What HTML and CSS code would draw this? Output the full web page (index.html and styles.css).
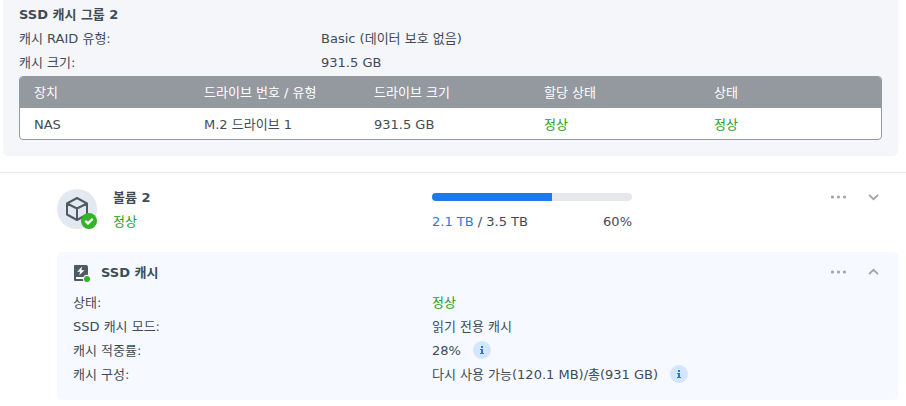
FILE: index.html
```html
<!DOCTYPE html>
<html lang="ko">
  <head>
    <meta charset="UTF-8" />
    <meta name="viewport" content="width=device-width, initial-scale=1.0" />
    <title>SSD 캐시</title>
    <link rel="stylesheet" href="styles.css">
  </head>
  <body>
    <section class="group">
      <h2 class="title">SSD 캐시 그룹 2</h2>
      <dl class="props">
        <dt>캐시 RAID 유형:</dt>
        <dd>Basic (데이터 보호 없음)</dd>
        <dt>캐시 크기:</dt>
        <dd>931.5 GB</dd>
      </dl>
      <div class="table-box">
        <table class="drives">
          <thead>
            <tr>
              <th>장치</th>
              <th>드라이브 번호 / 유형</th>
              <th>드라이브 크기</th>
              <th>할당 상태</th>
              <th class="last">상태</th>
            </tr>
          </thead>
          <tbody>
            <tr>
              <td>NAS</td>
              <td>M.2 드라이브 1</td>
              <td>931.5 GB</td>
              <td class="ok">정상</td>
              <td class="ok">정상</td>
            </tr>
          </tbody>
        </table>
      </div>
    </section>

    <section class="volume">
      <div class="volume-head">
        <div class="volume-name">
          <svg class="volume-icon" width="40" height="40" viewBox="0 0 40 40">
            <circle cx="20" cy="20" r="20" fill="#e2e9f0" />
            <path d="M20 9 L30 14.5 V25.5 L20 31 L10 25.5 V14.5 Z M10 14.5 L20 19.5 L30 14.5 M20 19.5 V31" fill="none" stroke="#505a66" stroke-width="2" stroke-linejoin="round" />
            <circle cx="32" cy="32" r="8" fill="#32b426" />
            <path d="M28.3 31.8 L31 34.3 L35.7 29.8" fill="none" stroke="#fff" stroke-width="2.4" />
          </svg>
          <div>
            <h2 class="title">볼륨 2</h2>
            <div class="ok">정상</div>
          </div>
        </div>
        <div class="usage">
          <div class="bar"><div class="bar-fill" style="width: 60%"></div></div>
          <div class="usage-text">
            <span><span class="used">2.1 TB</span> / 3.5 TB</span>
            <span>60%</span>
          </div>
        </div>
        <div class="actions">
          <button class="icon-btn" aria-label="더 보기">
            <svg width="16" height="16" viewBox="0 0 16 16" fill="#a0a4ab">
              <circle cx="1.5" cy="8" r="1.6" />
              <circle cx="7.5" cy="8" r="1.6" />
              <circle cx="13.5" cy="8" r="1.6" />
            </svg>
          </button>
          <button class="icon-btn" aria-label="펼치기">
            <svg width="16" height="16" viewBox="0 0 16 16" fill="none" stroke="#a0a4ab" stroke-width="1.8">
              <path d="M3 5.8 L7.5 10.2 L12 5.8" />
            </svg>
          </button>
        </div>
      </div>

      <div class="cache">
        <div class="cache-head">
          <svg class="cache-icon" width="17" height="17" viewBox="0 0 17 17">
            <path d="M2 0 H13 Q15 0 15 2 V15 Q15 16 14 16 H2 Q1 16 1 15 V1 Q1 0 2 0 Z" fill="#505a66" />
            <path d="M3 12 H13 V14 H3 Z M9 1.5 L4.2 6.8 H7.2 L6.2 10.2 L11.5 5.2 H8.4 Z" fill="#fff" />
            <circle cx="14" cy="14" r="4.2" fill="#f6f9ff" />
            <circle cx="14" cy="14" r="3" fill="#32b426" />
          </svg>
          <h3 class="title">SSD 캐시</h3>
          <div class="actions">
            <button class="icon-btn" aria-label="더 보기">
              <svg width="16" height="16" viewBox="0 0 16 16" fill="#a0a4ab">
                <circle cx="1.5" cy="8" r="1.6" />
                <circle cx="7.5" cy="8" r="1.6" />
                <circle cx="13.5" cy="8" r="1.6" />
              </svg>
            </button>
            <button class="icon-btn" aria-label="접기">
              <svg width="16" height="16" viewBox="0 0 16 16" fill="none" stroke="#a0a4ab" stroke-width="1.8">
                <path d="M3 10.2 L7.5 5.8 L12 10.2" />
              </svg>
            </button>
          </div>
        </div>
        <dl class="props cache-props">
          <dt>상태:</dt>
          <dd class="ok">정상</dd>
          <dt>SSD 캐시 모드:</dt>
          <dd>읽기 전용 캐시</dd>
          <dt>캐시 적중률:</dt>
          <dd>
            28%
            <button class="info" aria-label="정보">
              <svg width="18" height="18" viewBox="0 0 18 18" fill="#1d7be9">
                <path d="M8 5 H10 V7 H8 Z M7 8 H10 V12 H11 V13 H7 V12 H8 V9 H7 Z" />
              </svg>
            </button>
          </dd>
          <dt>캐시 구성:</dt>
          <dd>
            다시 사용 가능(120.1 MB)/총(931 GB)
            <button class="info" aria-label="정보">
              <svg width="18" height="18" viewBox="0 0 18 18" fill="#1d7be9">
                <path d="M8 5 H10 V7 H8 Z M7 8 H10 V12 H11 V13 H7 V12 H8 V9 H7 Z" />
              </svg>
            </button>
          </dd>
        </dl>
      </div>
    </section>
  </body>
</html>
```
FILE: styles.css
```css
* {
  box-sizing: border-box;
}
body {
  margin: 0;
  background: #fff;
  color: #414b55;
  font-family: Verdana, "DejaVu Sans", "Noto Sans CJK KR", sans-serif;
  font-size: 13px;
  line-height: 24px;
}
.title {
  margin: 0;
  font-size: 13px;
  font-weight: bold;
}
.ok {
  color: #1f9c16;
}

/* cache group */
.group {
  margin: 0 8px 16px 3px;
  padding: 3px 16px 16px;
  background: #f4f6fa;
  border-radius: 0 0 5px 5px;
}
.props {
  display: grid;
  grid-template-columns: 35% 1fr;
  margin: 0;
}
.props dd {
  margin: 0;
}
.table-box {
  margin-top: 1px;
  border: 1px solid #94989f;
  border-radius: 4px;
  background: #fff;
  overflow: hidden;
}
.drives {
  width: 100%;
  table-layout: fixed;
  border-collapse: collapse;
}
.drives th,
.drives td {
  width: 170px;
  height: 31px;
  padding: 0 14px;
  text-align: left;
  font-weight: normal;
}
.drives th {
  background: #94989f;
  color: #fff;
}
.drives td {
  padding-top: 2px;
}
.drives .last {
  width: auto;
}

/* volume */
.volume {
  padding: 13px 8px 0 57px;
  border-top: 1px solid #e6ebf2;
}
.volume-head {
  display: flex;
  align-items: flex-start;
}
.volume-name {
  display: flex;
  gap: 16px;
  width: 375px;
}
.volume-icon {
  margin-top: 3px;
}
.usage {
  width: 200px;
  padding-top: 7px;
}
.bar {
  height: 8px;
  border-radius: 4px;
  background: #e6e8eb;
  overflow: hidden;
}
.bar-fill {
  height: 100%;
  background: #1d7be9;
}
.usage-text {
  display: flex;
  justify-content: space-between;
  margin-top: 9px;
}
.used {
  color: #1d7be9;
}
.actions {
  display: flex;
  gap: 11px;
  align-self: flex-start;
  margin-left: auto;
  padding-right: 12px;
}
.icon-btn {
  display: flex;
  align-items: center;
  justify-content: center;
  width: 24px;
  height: 22px;
  padding: 0;
  border: none;
  background: none;
  cursor: pointer;
}

/* ssd cache */
.cache {
  margin-top: 18px;
  padding: 9px 0 13px 16px;
  border-radius: 5px;
  background: #f6f9ff;
}
.cache-head {
  display: flex;
  align-items: center;
  margin-bottom: 6px;
}
.cache-icon {
  margin-right: 11px;
}
.cache-props {
  grid-template-columns: 359px 1fr;
}
.info {
  width: 18px;
  height: 18px;
  margin-left: 8px;
  padding: 0;
  border: none;
  border-radius: 50%;
  background: #d3e6fd;
  vertical-align: -4px;
  cursor: pointer;
}
.info svg {
  display: block;
}
```
